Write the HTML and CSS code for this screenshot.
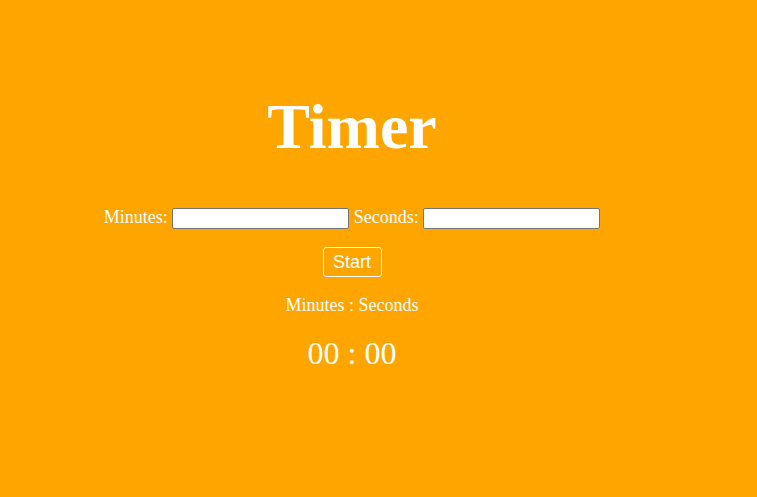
FILE: index.html
```html
<!DOCTYPE html>
<html>
<head>
<meta charset="utf-8">
<link rel="stylesheet" href="styles.css">
</head>
<body>
<div class="wrap">
  <h1 class="title">Timer</h1>
  <div class="row">
    <label>Minutes: <input type="text" class="field"></label>
    <label>Seconds: <input type="text" class="field"></label>
  </div>
  <div class="btn-row"><button class="start">Start</button></div>
  <p class="caption">Minutes : Seconds</p>
  <p class="display">00 : 00</p>
</div>
</body>
</html>
```
FILE: styles.css
```css
html, body {
  margin: 0;
  background: #ffa500;
}
body {
  font-family: "Liberation Serif", "Times New Roman", serif;
  color: #fff;
}
.wrap {
  width: 704px;
  text-align: center;
  padding-top: 1px;
}
.title {
  font-size: 64px;
  font-weight: bold;
  margin: 89px 0 0;
  line-height: 74px;
}
.row {
  margin-top: 41px;
  font-size: 18px;
  line-height: 24px;
}
.field {
  width: 171px;
  height: 17px;
  box-sizing: content-box;
  padding: 1px 2px;
  border: 1px solid #767676;
  border-radius: 2px;
  background: #fff;
  font-size: 13px;
  margin: 0;
}
.btn-row {
  margin-top: 18px;
}
.start {
  font-family: "Liberation Sans", Arial, sans-serif;
  font-size: 18px;
  color: #fff;
  background: transparent;
  border: 1px solid #fff;
  border-radius: 3px;
  padding: 4px 10px 3px 9px;
  line-height: 21px;
  margin-left: 1px;
}
.caption {
  font-size: 18px;
  margin: 17px 0 0;
  line-height: 22px;
}
.display {
  font-size: 32px;
  margin: 19px 0 0;
  line-height: 36px;
}
```
